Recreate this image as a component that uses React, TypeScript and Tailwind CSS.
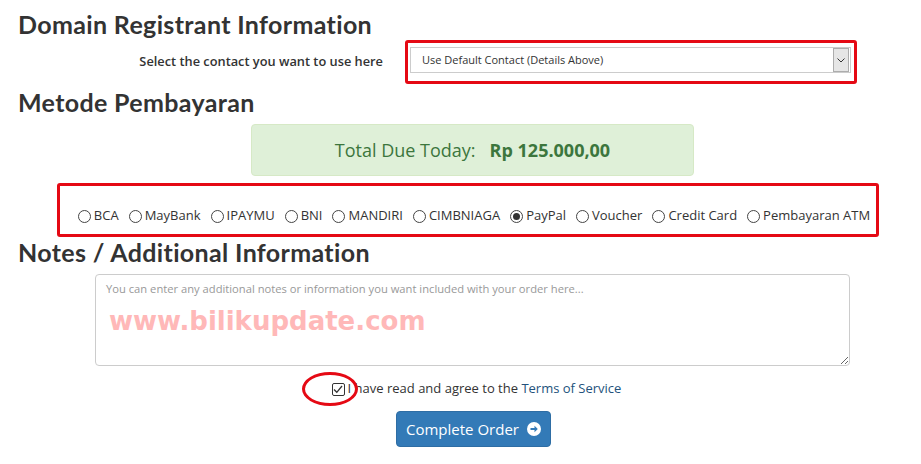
import React from "react";

const methods = [
  "BCA",
  "MayBank",
  "IPAYMU",
  "BNI",
  "MANDIRI",
  "CIMBNIAGA",
  "PayPal",
  "Voucher",
  "Credit Card",
  "Pembayaran ATM",
];

function Radio({ checked }: { checked?: boolean }) {
  return (
    <span className="mr-[3px] inline-flex h-[13px] w-[13px] shrink-0 items-center justify-center rounded-full border border-[#444] bg-white">
      {checked ? <span className="h-[7px] w-[7px] rounded-full bg-[#333]" /> : null}
    </span>
  );
}

function ArrowCircle() {
  return (
    <svg width="14" height="14" viewBox="0 0 14 14" className="ml-[8px]">
      <circle cx="7" cy="7" r="7" fill="white" />
      <path d="M3.5 6h4V3.8L10.8 7 7.5 10.2V8h-4z" fill="#337ab7" />
    </svg>
  );
}

export default function App() {
  const heading =
    "pl-[18px] text-[25px] font-bold leading-[30px] tracking-[0.35px] text-[#333] [font-family:Lato,'Open_Sans',sans-serif]";

  return (
    <div className="h-[464px] w-[921px] overflow-hidden bg-white pt-[9px] text-[#333] [font-family:'Open_Sans',sans-serif]">
      <h1 className={heading}>Domain Registrant Information</h1>

      <div className="mt-[1px] flex items-center">
        <div className="w-[383px] text-right text-[12.8px] font-semibold">Select the contact you want to use here</div>
        <div className="ml-[22px] h-[44px] w-[452px] rounded-[3px] border-[3px] border-[#e50914] pb-[8px] pl-[2px] pr-[3px] pt-[4px]">
          <div className="flex h-[26px] items-center border border-[#ccc] bg-white pl-[11px] pr-[1px] text-[11px] text-[#333]">
            <span className="flex-1">Use Default Contact (Details Above)</span>
            <span className="flex h-[24px] w-[16px] items-center justify-center border border-[#adadad] bg-[#e6e6e6]">
              <svg width="8" height="5" viewBox="0 0 8 5">
                <path d="M0.5 0.5L4 4L7.5 0.5" fill="none" stroke="#333" strokeWidth="1" />
              </svg>
            </span>
          </div>
        </div>
      </div>

      <h2 className={`mt-[3px] ${heading}`}>Metode Pembayaran</h2>

      <div className="ml-[251px] mt-[7px] flex h-[52px] w-[443px] items-center justify-center rounded-[4px] border border-[#d6e9c6] bg-[#dff0d8] text-[18px] text-[#3c763d]">
        <span>Total Due Today:</span>
        <span className="ml-[14px] font-bold">Rp 125.000,00</span>
      </div>

      <div className="ml-[57px] mt-[7px] flex h-[54px] w-[822px] items-center justify-center rounded-[3px] border-[3px] border-[#e50914] pl-[12px] pt-[12px]">
        {methods.map((m) => (
          <label key={m} className="mr-[10px] flex items-center text-[13px] last:mr-0">
            <Radio checked={m === "PayPal"} />
            {m}
          </label>
        ))}
      </div>

      <h3 className={heading}>Notes / Additional Information</h3>

      <div className="relative ml-[95px] mt-[7px] w-[755px]">
        <textarea
          className="block h-[92px] w-full resize-y rounded-[4px] border border-[#ccc] px-[10px] py-[6px] text-[11.2px] leading-[15px] outline-none placeholder:text-[#999]"
          placeholder="You can enter any additional notes or information you want included with your order here..."
        />
        <span className="pointer-events-none absolute left-[14px] top-[34px] text-[26px] font-bold leading-[26px] text-[#ffb8b8] [font-family:'DejaVu_Sans',sans-serif]">
          www.bilikupdate.com
        </span>
      </div>

      <div className="relative mt-[13px] flex h-[20px] items-center justify-center pl-[32px] text-[13px]">
        <span className="mr-[3px] flex h-[13px] w-[13px] items-center justify-center rounded-[2px] border border-[#333] bg-white">
          <svg width="10" height="9" viewBox="0 0 10 9">
            <path d="M1 4.5L3.8 7.3L9 1" fill="none" stroke="#333" strokeWidth="1.3" />
          </svg>
        </span>
        <span>
          I have read and agree to the <span className="text-[#23527c]">Terms of Service</span>
        </span>
        <span className="pointer-events-none absolute left-[302px] top-[-7px] h-[34px] w-[56px] rounded-[50%] border-[3px] border-[#e50914]" />
      </div>

      <div className="ml-[396px] mt-[12px] flex h-[36px] w-[155px] items-center justify-center rounded-[4px] border border-[#2e6da4] bg-[#337ab7] text-[15px] text-white">
        Complete Order
        <ArrowCircle />
      </div>
    </div>
  );
}
